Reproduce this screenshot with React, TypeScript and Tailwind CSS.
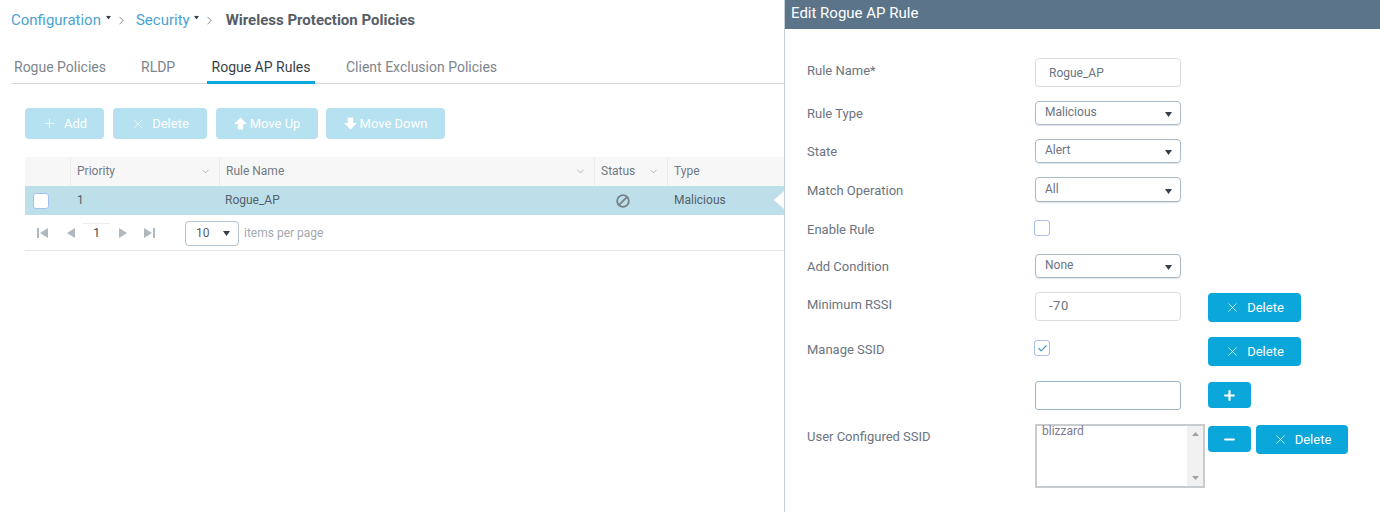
import { Plus, X, Check, Ban, ChevronDown, ChevronRight, Minus } from 'lucide-react'

const LABEL = 'text-[13px] text-[#6b7480]'

function Caret({ className = '' }: { className?: string }) {
  return (
    <svg width="7" height="5" viewBox="0 0 7 5" className={className}>
      <path d="M0 0h7L3.5 5z" fill="#33404d" />
    </svg>
  )
}

function Pager({ d }: { d: string }) {
  return (
    <svg width="11" height="10" viewBox="0 0 11 10" className="shrink-0">
      <path d={d} fill="#b0b7bd" />
    </svg>
  )
}

function BlockArrow({ down = false }: { down?: boolean }) {
  return (
    <svg width="13" height="13" viewBox="0 0 13 13" className={down ? 'rotate-180' : ''}>
      <path d="M6.5 0.5 13 7H9.2v5.5H3.8V7H0z" fill="white" />
    </svg>
  )
}

function TopButton({ width, icon, label, gap = 'gap-[7px]' }: { width: string; icon: React.ReactNode; label: string; gap?: string }) {
  return (
    <div className={`${width} h-[31px] rounded-[4px] bg-[#b5e1f0] text-white text-[13px] flex items-center justify-center ${gap}`}>
      {icon}
      <span>{label}</span>
    </div>
  )
}

function DeleteButton({ className = '', width = 'w-[93px]' }: { className?: string; width?: string }) {
  return (
    <div className={`${width} h-[29px] rounded-[4px] bg-[#0ba7da] text-white text-[13px] flex items-center justify-center gap-[7px] ${className}`}>
      <X size={15} strokeWidth={1.2} />
      <span>Delete</span>
    </div>
  )
}

function IconButton({ children, className = '' }: { children: React.ReactNode; className?: string }) {
  return (
    <div className={`w-[43px] h-[26px] rounded-[4px] bg-[#0ba7da] text-white flex items-center justify-center ${className}`}>
      {children}
    </div>
  )
}

function Select({ value, height = 'h-[24px]' }: { value: string; height?: string }) {
  return (
    <div className={`w-[146px] ${height} rounded-[4px] border border-[#a9bac8] pl-[9px] pr-[8px] flex items-center justify-between text-[12px] text-[#6b7480] shadow-[0_1px_1px_rgba(120,140,160,0.25)]`}>
      <span className="-mt-[2px]">{value}</span>
      <Caret className="mt-[3px]" />
    </div>
  )
}

function Checkbox({ checked = false, className = '' }: { checked?: boolean; className?: string }) {
  return (
    <div className={`w-[16px] h-[16px] rounded-[3px] border-[1.5px] border-[#a5c2ee] bg-white flex items-center justify-center ${className}`}>
      {checked && <Check size={11} strokeWidth={2.5} className="text-[#3d9fc4]" />}
    </div>
  )
}

function Row({ label, labelTop, height, top, children }: { label?: string; labelTop: string; height: string; top: string; children: React.ReactNode }) {
  return (
    <div className={`flex items-start ${height} ${top}`}>
      <div className={`w-[228px] shrink-0 ${LABEL} ${labelTop}`}>{label}</div>
      {children}
    </div>
  )
}

function HeaderCell({ width, label, sort = true }: { width: string; label: string; sort?: boolean }) {
  return (
    <div className={`${width} h-full border-l border-[#ececec] pl-[6px] pr-[8px] flex items-center justify-between`}>
      <span className="-mt-[2px]">{label}</span>
      {sort && <ChevronDown size={11} strokeWidth={1.4} className="text-[#8b939b]" />}
    </div>
  )
}

export default function App() {
  return (
    <div className="w-[1380px] h-[512px] overflow-hidden bg-white flex font-['Roboto','Open_Sans',sans-serif]">
      {/* Left page */}
      <div className="w-[784px] shrink-0">
        <div className="h-[41px] pl-[11px] flex items-center text-[15px]">
          <span className="text-[#4ba3d3]">Configuration</span>
          <Caret className="ml-[4px] mb-[6px] scale-75" />
          <ChevronRight size={13} strokeWidth={1.4} className="ml-[3px] text-[#5b6670]" />
          <span className="ml-[8px] text-[#4ba3d3]">Security</span>
          <Caret className="ml-[3px] mb-[6px] scale-75" />
          <ChevronRight size={13} strokeWidth={1.4} className="ml-[3px] text-[#5b6670]" />
          <span className="ml-[10px] font-bold text-[#555d66]">Wireless Protection Policies</span>
        </div>

        <div className="mt-[13px] h-[30px] border-b border-[#d6dadd] flex text-[14px] text-[#7d858d] ml-[11px]">
          <div className="pl-[3px] w-[99px] pt-[3px]">Rogue Policies</div>
          <div className="w-[97px] pl-[31px] pt-[3px]">RLDP</div>
          <div className="w-[108px] h-[30px] border-b-[3px] border-[#0ba7da] text-center text-[#39424b] pt-[3px]">Rogue AP Rules</div>
          <div className="ml-[31px] pt-[3px]">Client Exclusion Policies</div>
        </div>

        <div className="ml-[25px] mt-[24px] flex">
          <TopButton width="w-[79px]" icon={<Plus size={15} strokeWidth={1.2} />} label="Add" />
          <TopButton width="w-[94px] ml-[9px]" icon={<X size={14} strokeWidth={1.2} />} label="Delete" />
          <TopButton width="w-[102px] ml-[9px]" icon={<BlockArrow />} label="Move Up" gap="gap-[3px]" />
          <TopButton width="w-[119px] ml-[8px]" icon={<BlockArrow down />} label="Move Down" gap="gap-[3px]" />
        </div>

        <div className="ml-[25px] mt-[18px] text-[12px] text-[#727a83]">
          <div className="h-[29px] bg-[#f7f7f7] flex items-center">
            <div className="w-[45px]" />
            <HeaderCell width="w-[149px]" label="Priority" />
            <HeaderCell width="w-[375px]" label="Rule Name" />
            <HeaderCell width="w-[73px]" label="Status" />
            <HeaderCell width="w-[117px]" label="Type" sort={false} />
          </div>
          <div className="h-[29px] bg-[#bcdfea] flex items-center text-[#55606b] relative">
            <div className="w-[45px] pl-[8px]">
              <Checkbox className="border-[#8fb8e6]" />
            </div>
            <div className="w-[149px] pl-[7px] -mt-[2px]">1</div>
            <div className="w-[375px] pl-[6px] -mt-[2px]">Rogue_AP</div>
            <div className="w-[73px] flex justify-center pr-[15px]">
              <Ban size={14} strokeWidth={3.2} className="text-[#79838c] -scale-x-100" />
            </div>
            <div className="pl-[7px] -mt-[2px]">Malicious</div>
            <div className="absolute right-0 top-[5px] w-0 h-0 border-y-[9px] border-y-transparent border-r-[10px] border-r-white" />
          </div>
          <div className="h-[36px] border-b border-[#e3e6e8] flex items-center">
            <div className="ml-[12px] flex items-center gap-[17px]">
              <Pager d="M0 0h2v10H0zM11 0v10L3 5z" />
              <Pager d="M10 0v10L2 5z" />
            </div>
            <div className="ml-[7px] w-[27px] text-center text-[#3d4650] border-t border-[#ececec]">1</div>
            <div className="flex items-center gap-[15px] ml-[8px]">
              <Pager d="M1 0l8 5-8 5z" />
              <Pager d="M0 0l8 5-8 5zM9 0h2v10H9z" />
            </div>
            <div className="ml-[30px] mt-[1px] w-[54px] h-[25px] rounded-[4px] border border-[#b4c5d1] flex items-center justify-between pl-[10px] pr-[8px] text-[#55606b]">
              <span>10</span>
              <Caret />
            </div>
            <span className="ml-[5px] text-[#a3a9af]">items per page</span>
          </div>
        </div>
      </div>

      {/* Edit panel */}
      <div className="w-[596px] shrink-0 border-l border-[#c3ced6]">
        <div className="h-[29px] bg-[#5b7489] text-white text-[15px] pl-[6px] pb-[3px] flex items-center">Edit Rogue AP Rule</div>
        <div className="pl-[22px]">
          <Row label="Rule Name*" labelTop="mt-[3px]" height="h-[29px]" top="mt-[29px]">
            <div className="w-[146px] h-[29px] rounded-[4px] border border-[#d8dde1] pl-[13px] flex items-center text-[12px] text-[#6b7480]">Rogue_AP</div>
          </Row>
          <Row label="Rule Type" labelTop="mt-[3px]" height="h-[24px]" top="mt-[14px]">
            <Select value="Malicious" />
          </Row>
          <Row label="State" labelTop="mt-[3px]" height="h-[24px]" top="mt-[14px]">
            <Select value="Alert" />
          </Row>
          <Row label="Match Operation" labelTop="mt-[4px]" height="h-[25px]" top="mt-[14px]">
            <Select value="All" height="h-[25px]" />
          </Row>
          <Row label="Enable Rule" labelTop="mt-[0px]" height="h-[16px]" top="mt-[18px]">
            <Checkbox className="-ml-[1px]" />
          </Row>
          <Row label="Add Condition" labelTop="mt-[3px]" height="h-[24px]" top="mt-[18px]">
            <Select value="None" />
          </Row>
          <Row label="Minimum RSSI" labelTop="mt-[3px]" height="h-[29px]" top="mt-[14px]">
            <div className="w-[146px] h-[29px] rounded-[4px] border border-[#d8dde1] pl-[13px] pb-[2px] flex items-center text-[13px] tracking-[0.5px] text-[#6b7480]">-70</div>
            <DeleteButton className="ml-[27px] mt-[1px]" />
          </Row>
          <Row label="Manage SSID" labelTop="mt-[3px]" height="h-[29px]" top="mt-[16px]">
            <Checkbox checked className="-ml-[1px] mt-[3px]" />
            <div className="w-[147px] shrink-0" />
            <DeleteButton className="ml-[11px]" />
          </Row>
          <Row labelTop="" height="h-[29px]" top="mt-[15px]">
            <div className="w-[146px] h-[29px] rounded-[3px] border border-[#9db4c6]" />
            <IconButton className="ml-[27px] mt-[1px]"><Plus size={15} strokeWidth={3.5} /></IconButton>
          </Row>
          <Row label="User Configured SSID" labelTop="mt-[3px]" height="h-[64px]" top="mt-[14px]">
            <div className="w-[170px] h-[64px] border-2 border-[#c9cccf] flex text-[12px] text-[#7d7a90]">
              <span className="flex-1 pl-[5px] -mt-[2px] leading-[14px]">blizzard</span>
              <div className="w-[16px] bg-[#f1f1f1] flex flex-col items-center justify-between py-[6px]">
                <svg width="7" height="4" viewBox="0 0 7 4"><path d="M0 4h7L3.5 0z" fill="#a3a3a3" /></svg>
                <svg width="7" height="4" viewBox="0 0 7 4"><path d="M0 0h7L3.5 4z" fill="#a3a3a3" /></svg>
              </div>
            </div>
            <IconButton className="ml-[3px] mt-[2px]"><Minus size={15} strokeWidth={3.5} /></IconButton>
            <DeleteButton className="ml-[5px] mt-[1px]" width="w-[92px]" />
          </Row>
        </div>
      </div>
    </div>
  )
}
